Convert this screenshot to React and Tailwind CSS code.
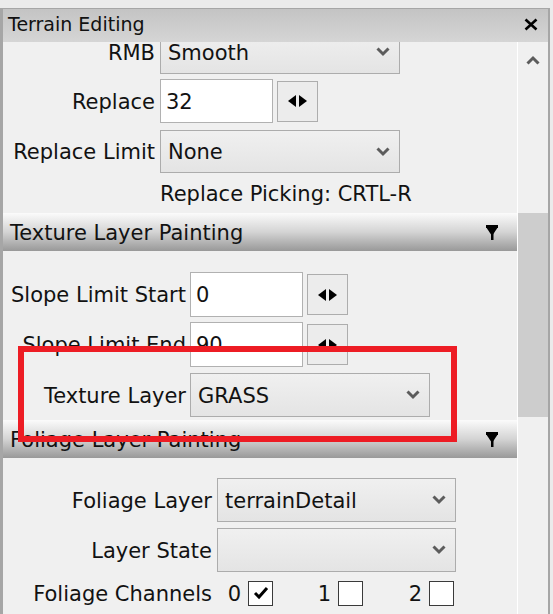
import React from "react";

const Chevron = ({ up }) => (
  <svg width="14" height="10" viewBox="0 0 14 10">
    <polyline
      points={up ? "1.5,8.5 7,3 12.5,8.5" : "1.5,1.5 7,7 12.5,1.5"}
      fill="none"
      stroke="#5c5c5c"
      strokeWidth="3"
    />
  </svg>
);

const Spin = () => (
  <div className="w-[41px] h-[41px] ml-[4px] shrink-0 border border-[#adadad] bg-[#ececec] flex items-center justify-center">
    <svg width="21" height="12" viewBox="0 0 21 12">
      <polygon points="9,0 9,12 1,6" fill="#000" />
      <polygon points="12,0 12,12 20,6" fill="#000" />
    </svg>
  </div>
);

const Select = ({ value, className }) => (
  <div
    className={`${className} shrink-0 border border-[#acacac] bg-gradient-to-b from-[#f0f0f0] to-[#e4e4e4] flex items-center justify-between pl-[7px] pr-[9px]`}
  >
    <span className="pt-[3px]">{value}</span>
    <Chevron />
  </div>
);

const Input = ({ value, className }) => (
  <div
    className={`${className} shrink-0 border border-[#b1b1b1] bg-white flex items-center pl-[5px] pt-[3px]`}
  >
    {value}
  </div>
);

const Header = ({ title, className }) => (
  <div
    className={`${className} h-[38px] flex items-center justify-between pl-[7px] pr-[19px] bg-gradient-to-b from-[#fbfbfb] via-[#d4d4d4] to-[#999999]`}
  >
    <span className="pt-[4px]">{title}</span>
    <svg width="12" height="15" viewBox="0 0 12 15">
      <rect x="0" y="0" width="12" height="3" fill="#000" />
      <polygon points="0,2 12,2 6,11" fill="#000" />
      <rect x="5" y="8" width="2.5" height="7" fill="#000" />
    </svg>
  </div>
);

const Check = ({ checked }) => (
  <div className="w-[25px] h-[25px] border border-[#3a3a3a] bg-white flex items-center justify-center ml-[7px]">
    {checked && (
      <svg width="16" height="14" viewBox="0 0 16 14">
        <polyline points="2,7 6,11 14,2" fill="none" stroke="#000" strokeWidth="3" />
      </svg>
    )}
  </div>
);

export default function App() {
  return (
    <div className="relative w-[553px] h-[614px] overflow-hidden bg-[#ebebeb] text-[#121212] text-[21px] font-['DejaVu_Sans',sans-serif]">
      <div className="mt-[8px] w-[550px] h-[606px] border-t border-l-[3px] border-r-[2px] border-[#a6a6a6] flex flex-col">
        <div className="h-[33px] shrink-0 flex items-center justify-between pl-[5px] pr-[10px] pb-[3px] bg-gradient-to-b from-[#c4c4c4] to-[#d5d5d5] text-[19px] text-[#111]">
          <span>Terrain Editing</span>
          <svg width="14" height="13" viewBox="0 0 14 13">
            <path d="M1.5 1.5 L12.5 11.5 M12.5 1.5 L1.5 11.5" stroke="#000" strokeWidth="2.6" />
          </svg>
        </div>
        <div className="flex flex-1 min-h-0">
          <div className="w-[514px] shrink-0 bg-[#f0f0f0] overflow-hidden">
            <div className="-mt-[12px]">
              <div className="flex items-center h-[44px]">
                <div className="w-[157px] text-right pr-[5px] pt-[3px]">RMB</div>
                <Select value="Smooth" className="w-[240px] h-[44px]" />
              </div>
              <div className="flex items-center h-[44px] mt-[5px]">
                <div className="w-[157px] text-right pr-[5px] pt-[3px]">Replace</div>
                <Input value="32" className="w-[113px] h-[44px]" />
                <Spin />
              </div>
              <div className="flex items-center h-[43px] mt-[7px]">
                <div className="w-[157px] text-right pr-[5px] pt-[3px]">Replace Limit</div>
                <Select value="None" className="w-[240px] h-[43px]" />
              </div>
              <div className="h-[40px] flex items-center pl-[157px] pt-[3px]">
                Replace Picking: CRTL-R
              </div>
              <Header title="Texture Layer Painting" className="h-[37px]" />
              <div className="flex items-center h-[45px] mt-[21px]">
                <div className="w-[187px] text-right pr-[4px] pt-[3px]">Slope Limit Start</div>
                <Input value="0" className="w-[113px] h-[45px]" />
                <Spin />
              </div>
              <div className="flex items-center h-[45px] mt-[5px]">
                <div className="w-[187px] text-right pr-[4px] pt-[3px]">Slope Limit End</div>
                <Input value="90" className="w-[113px] h-[45px]" />
                <Spin />
              </div>
              <div className="flex items-center h-[44px] mt-[6px]">
                <div className="w-[187px] text-right pr-[4px] pt-[3px]">Texture Layer</div>
                <Select value="GRASS" className="w-[240px] h-[44px]" />
              </div>
              <Header title="Foliage Layer Painting" className="mt-[3px]" />
              <div className="flex items-center h-[44px] mt-[20px]">
                <div className="w-[214px] text-right pr-[5px] pt-[3px]">Foliage Layer</div>
                <Select value="terrainDetail" className="w-[239px] h-[44px]" />
              </div>
              <div className="flex items-center h-[44px] mt-[6px]">
                <div className="w-[214px] text-right pr-[5px] pt-[3px]">Layer State</div>
                <Select value="" className="w-[239px] h-[44px]" />
              </div>
              <div className="flex items-center h-[30px] mt-[6px]">
                <div className="w-[214px] text-right pr-[5px] pt-[3px]">Foliage Channels</div>
                <div className="w-[56px] flex items-center justify-end">
                  <span className="pt-[3px]">0</span>
                  <Check checked />
                </div>
                <div className="w-[90px] flex items-center justify-end">
                  <span className="pt-[3px]">1</span>
                  <Check />
                </div>
                <div className="w-[91px] flex items-center justify-end">
                  <span className="pt-[3px]">2</span>
                  <Check />
                </div>
              </div>
            </div>
          </div>
          <div className="w-[31px] shrink-0 border-l border-white bg-[#f0f0f0] flex flex-col">
            <div className="h-[33px] flex items-center justify-center pt-[3px]">
              <Chevron up />
            </div>
            <div className="h-[138px]" />
            <div className="h-[204px] bg-[#cdcdcd]" />
          </div>
        </div>
      </div>
      <div className="absolute left-[18px] top-[346px] w-[439px] h-[96px] border-[6px] border-[#ed1c24]" />
    </div>
  );
}
